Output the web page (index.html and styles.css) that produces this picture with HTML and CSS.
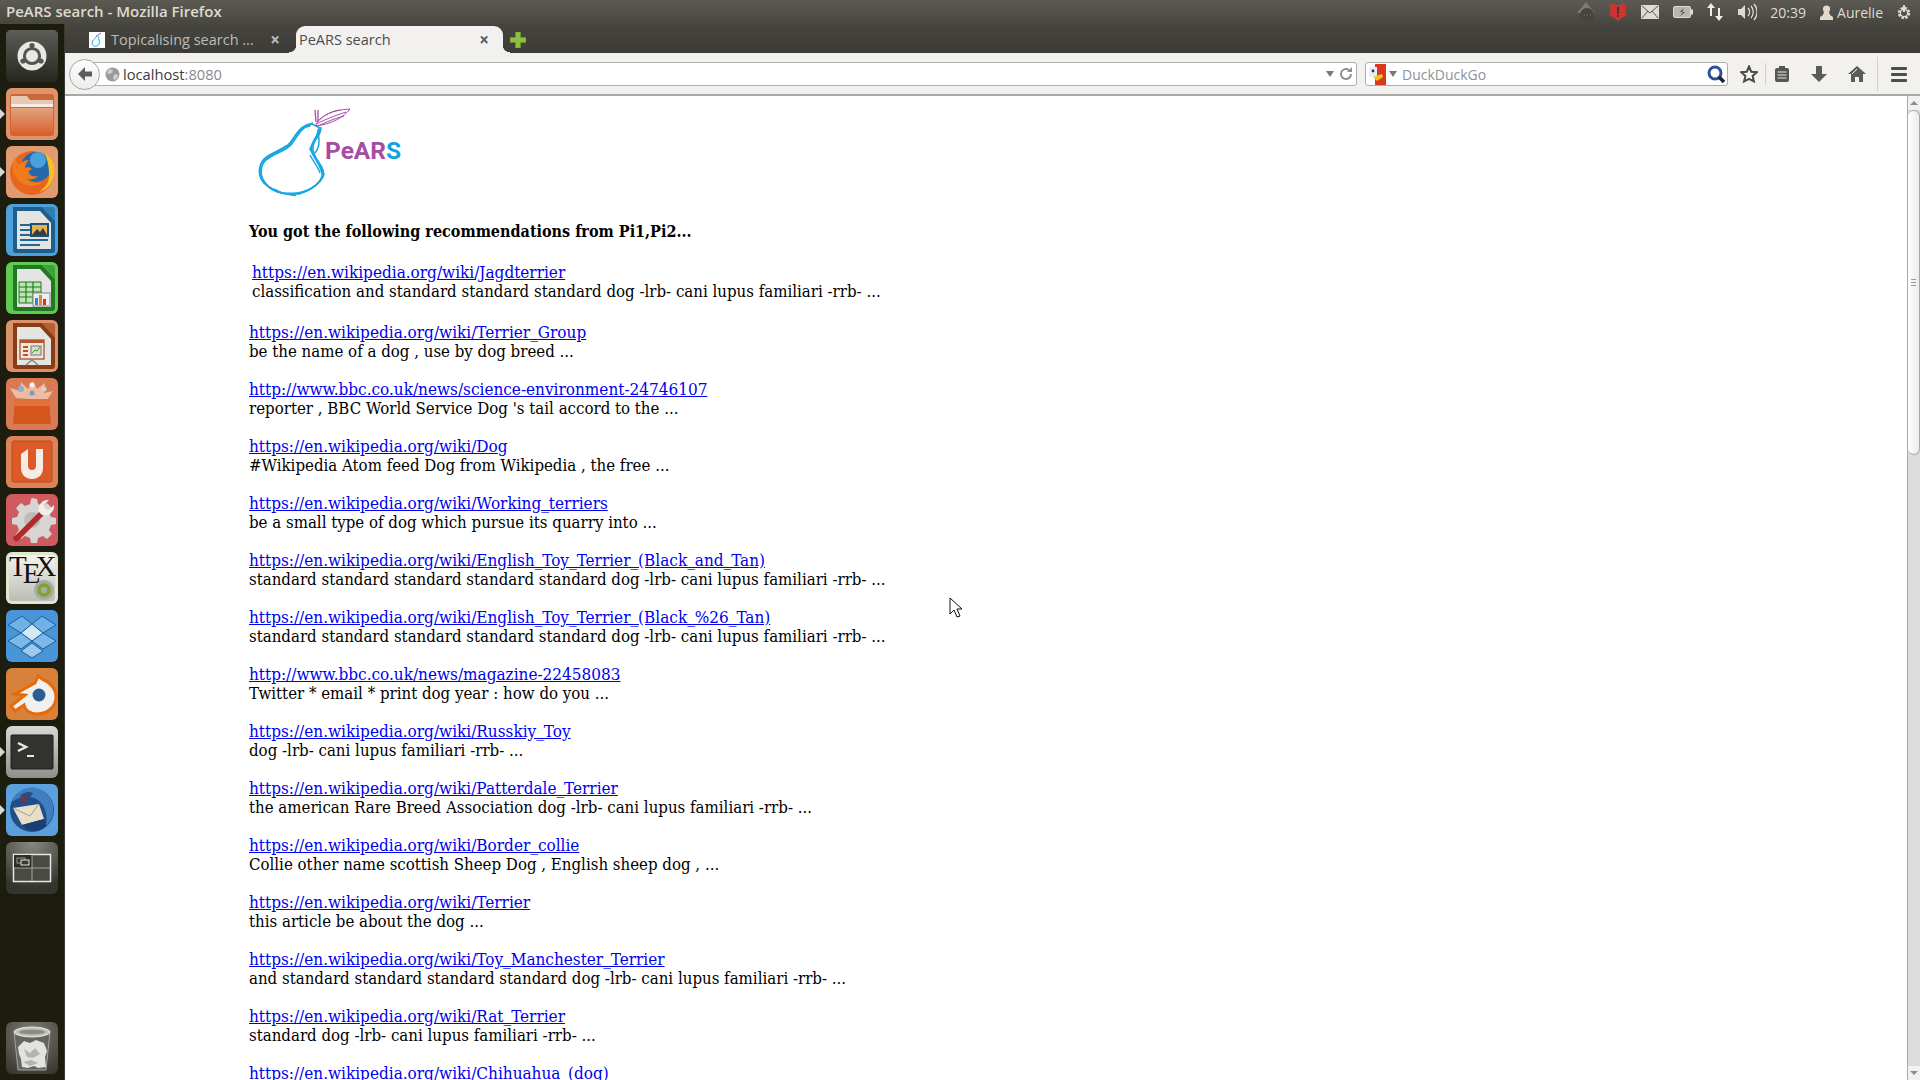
FILE: index.html
```html
<!DOCTYPE html>
<html lang="en">
<head>
    <meta charset="UTF-8">
    <title>PeARS search - Mozilla Firefox</title>
    <link rel="stylesheet" href="styles.css">
</head>
<body>
<div class="panel">
    <div class="panel-title">PeARS search - Mozilla Firefox</div>
    <div class="tray">
        <svg class="tray-cloud" width="24" height="22" viewBox="0 0 24 22"><path d="M3 12l9-11 9 11z" fill="#7d7b73"/><circle cx="13" cy="14" r="7" fill="#45443e"/><path d="M10 14h1m2 0h1m2 0h1" stroke="#85837b" stroke-width="1.2"/></svg>
        <svg class="tray-shield" width="20" height="20" viewBox="0 0 20 20"><path d="M1 4l4-3 3 2h4l3-2 4 3-2 5 2 4-5 3-4 3-4-3-5-3 2-4z" fill="#d0322d"/><path d="M9 5h2v7H9zm0 8h2v2H9z" fill="#3c3b37"/></svg>
        <svg class="tray-mail" width="18" height="14" viewBox="0 0 18 14"><rect width="18" height="14" rx="1" fill="#dfdbd2"/><path d="M1 1l8 7 8-7M1 13l6-7m10 7l-6-7" stroke="#56554f" fill="none"/></svg>
        <svg class="tray-batt" width="20" height="12" viewBox="0 0 20 12"><rect x=".5" y=".5" width="17" height="11" rx="1.5" fill="#b9b6ae" stroke="#dfdbd2"/><rect x="18" y="3.5" width="2" height="5" fill="#dfdbd2"/><path d="M11 2L7 6h3L7 10l5-4H9z" fill="#3c3b37"/></svg>
        <svg class="tray-net" width="18" height="20" viewBox="0 0 18 20"><path d="M5 1L1 6h3v8h2V6h3zM13 19l4-5h-3V6h-2v8H9z" fill="#ecebe6"/></svg>
        <svg class="tray-vol" width="20" height="18" viewBox="0 0 20 18"><path d="M1 6h3l4-4v14l-4-4H1z" fill="#dfdbd2"/><path d="M11 5a6 6 0 0 1 0 8M14 3a9 9 0 0 1 0 12M17 1a12 12 0 0 1 0 16" stroke="#dfdbd2" stroke-width="1.3" fill="none"/></svg>
        <span class="tray-time">20:39</span>
        <svg class="tray-user" width="13" height="15" viewBox="0 0 13 15"><circle cx="6.5" cy="4" r="3.6" fill="#dfdbd2"/><path d="M4 7h5l1 3 3 2v3H0v-3l3-2z" fill="#dfdbd2"/></svg>
        <span class="tray-name">Aurelie</span>
        <svg class="tray-gear" width="16" height="16" viewBox="0 0 16 16"><circle cx="8" cy="9" r="5" fill="none" stroke="#dfdbd2" stroke-width="2.4" stroke-dasharray="2.5 1.4"/><circle cx="8" cy="9" r="3.6" fill="none" stroke="#dfdbd2" stroke-width="1.2"/><rect x="7" y="1" width="2" height="7" fill="#dfdbd2"/></svg>
    </div>
</div>

<div class="desktop">
    <nav class="launcher">
        <div class="tile"><svg viewBox="0 0 52 52"><defs><linearGradient id="bfb" x1="0" y1="0" x2="0" y2="1"><stop offset="0" stop-color="#5e5e58"/><stop offset="1" stop-color="#26261f"/></linearGradient></defs><path d="M3 0h46l3 3v46l-3 3H3l-3-3V3z" fill="url(#bfb)"/><circle cx="26" cy="26" r="14.5" fill="#e8e8e6"/><circle cx="26" cy="26" r="7.6" fill="none" stroke="#55554f" stroke-width="3"/><circle cx="26" cy="15.5" r="2.6" fill="#55554f"/><circle cx="17" cy="31" r="2.6" fill="#55554f"/><circle cx="35" cy="31" r="2.6" fill="#55554f"/></svg></div>

        <div class="tile has-pip"><svg viewBox="0 0 52 52"><defs><linearGradient id="fld" x1="0" y1="0" x2="0" y2="1"><stop offset="0" stop-color="#e2a37e"/><stop offset="1" stop-color="#d85f2a"/></linearGradient></defs><rect width="52" height="52" rx="6" fill="#e0926a"/><rect x="4" y="6" width="44" height="42" rx="3" fill="#c9683c"/><path d="M5 20h42v25a2 2 0 0 1-2 2H7a2 2 0 0 1-2-2z" fill="url(#fld)"/><path d="M5 8h16l3 4h23v6H5z" fill="#e8c8b2"/><path d="M5 16h42v3H5z" fill="#f4ece5"/></svg></div>

        <div class="tile has-pip has-active"><svg viewBox="0 0 52 52"><rect width="52" height="52" rx="6" fill="#e29a70"/><circle cx="26" cy="27" r="22" fill="#e8651f"/><circle cx="30" cy="21" r="15" fill="#2468ad"/><circle cx="32" cy="14" r="8" fill="#4aa0da"/><path d="M9 11c-5 9-2 19 5 25 7 5 17 5 23 0-6 2-13 1-17-3 5 1 10 0 12-3-4 1-8 0-9-3-1-2 1-3 3-4-2-2-5-2-7-1 0-3 2-6 4-8-5 0-8 3-10 5-2-2-3-5-4-8z" fill="#ef7b1c"/><path d="M39 7c7 5 11 13 9 23-2 9-8 14-15 16 7-5 11-11 10-19 0-7-2-14-4-20z" fill="#f6c026"/></svg></div>

        <div class="tile"><svg viewBox="0 0 52 52"><rect width="52" height="52" rx="6" fill="#4f9fd8"/><path d="M7 3h29l13 14v29a3 3 0 0 1-3 3H10a3 3 0 0 1-3-3z" fill="#1b5f8e"/><path d="M36 3h10a3 3 0 0 1 3 3v11z" fill="#2f7fb5"/><path d="M11 7h23l11 12v26H11z" fill="#e4e4e2"/><path d="M14 20h10v2H14zm0 5h10v2H14zm0 5h10v2H14zm0 5h28v2H14zm0 5h20v2H14z" fill="#1d6a9a"/><rect x="24" y="19" width="19" height="14" fill="#1d4f74"/><rect x="26" y="21" width="15" height="10" fill="#e6b24a"/><path d="M26 31l5-6 3 3 3-4 4 7z" fill="#2f3f4a"/></svg></div>

        <div class="tile"><svg viewBox="0 0 52 52"><rect width="52" height="52" rx="6" fill="#5fca4d"/><path d="M7 3h29l13 14v29a3 3 0 0 1-3 3H10a3 3 0 0 1-3-3z" fill="#1f7a22"/><path d="M36 3h10a3 3 0 0 1 3 3v11z" fill="#3ea33a"/><path d="M11 7h23l11 12v26H11z" fill="#e4e4e2"/><path d="M13 20h22v21H13z" fill="#bfe3b4" stroke="#1d7d22"/><path d="M13 25h22M13 30h22M13 35h22M20 20v21M27 20v21" stroke="#1d7d22" fill="none" stroke-width="1.2"/><rect x="27" y="31" width="17" height="13" fill="#eee" stroke="#8a8a86"/><path d="M29 36h3v7h-3z" fill="#2e8ad0"/><path d="M33 33h3v10h-3z" fill="#e0872b"/><path d="M37 37h3v6h-3z" fill="#c33"/></svg></div>

        <div class="tile"><svg viewBox="0 0 52 52"><rect width="52" height="52" rx="6" fill="#dc9268"/><path d="M7 3h29l13 14v29a3 3 0 0 1-3 3H10a3 3 0 0 1-3-3z" fill="#8a3c16"/><path d="M36 3h10a3 3 0 0 1 3 3v11z" fill="#b06034"/><path d="M11 7h23l11 12v26H11z" fill="#e4e4e2"/><rect x="14" y="20" width="24" height="19" fill="#f1e5dd" stroke="#9c4a22" stroke-width="1.2"/><rect x="14" y="20" width="24" height="3" fill="#b5562a"/><path d="M17 26h5v2h-5zm0 4h5v2h-5zm0 4h5v2h-5z" fill="#b5562a"/><rect x="25" y="26" width="10" height="9" fill="#dcdcc8" stroke="#777"/><path d="M26 33l3-3 2 1 3-4" stroke="#3a9a3a" fill="none"/><path d="M20 45l6-5 6 5" stroke="#888" fill="none" stroke-width="1.4"/></svg></div>

        <div class="tile"><svg viewBox="0 0 52 52"><rect width="52" height="52" rx="6" fill="#d97a55"/><path d="M10 20L4 10l10 3 1-9 7 7 5-8 4 8 8-6-1 10 9-2-6 9z" fill="#f0cdb8" opacity=".8"/><path d="M9 21h34l2 25H7z" fill="#d4561e"/><path d="M9 21h34l.6 7H8.400z" fill="#e0713a"/><path d="M21 21v-4h10v4" fill="none" stroke="#eeb598" stroke-width="2"/><circle cx="15" cy="11" r="3" fill="#8fb0cc"/><circle cx="26" cy="7" r="2.5" fill="#f2f2f2"/><circle cx="38" cy="11" r="2.5" fill="#d9d2c8"/><circle cx="26" cy="15" r="2.5" fill="#7f9bb5"/></svg></div>

        <div class="tile"><svg viewBox="0 0 52 52"><rect width="52" height="52" rx="6" fill="#dd8259"/><rect x="6" y="5" width="40" height="41" rx="2" fill="#dc5a28" stroke="#b84a1f"/><path d="M15 18l7-5v17c0 3 2 4 4 4s4-1 4-4V13h7v19c0 7-5 11-11 11s-11-4-11-11z" fill="#f5ece6"/></svg></div>

        <div class="tile"><svg viewBox="0 0 52 52"><rect width="52" height="52" rx="6" fill="#cf5a60"/><path d="M26 4l5 1 1 5 5 2 4-3 5 5-3 4 2 5 5 1v6l-5 1-2 5 3 4-5 5-4-3-5 2-1 5h-6l-1-5-5-2-4 3-5-5 3-4-2-5-5-1v-6l5-1 2-5-3-4 5-5 4 3 5-2 1-5z" fill="#d6d5d2"/><circle cx="26" cy="26" r="8" fill="#bdbcb9"/><path d="M9 42L35 16l4 4L13 46a3 3 0 0 1-5-4z" fill="#b22a2a"/><path d="M33 18c-2-6 3-13 10-12l-5 5 1 4 4 1 5-5c1 7-6 12-12 10z" fill="#f0efec"/></svg></div>

        <div class="tile"><svg viewBox="0 0 52 52"><defs><linearGradient id="tx" x1="0" y1="0" x2="0" y2="1"><stop offset="0" stop-color="#f5f5ee"/><stop offset="1" stop-color="#bcbcb6"/></linearGradient></defs><rect width="52" height="52" rx="6" fill="#dfe7cf"/><rect x="3" y="3" width="46" height="46" rx="3" fill="url(#tx)"/><text class="tex-t" x="3" y="24">T<tspan dx="-4" dy="7">E</tspan><tspan dx="-5" dy="-7">X</tspan></text><circle cx="38" cy="38" r="10" fill="#a8a8a4"/><circle cx="38" cy="38" r="5" fill="none" stroke="#7da526" stroke-width="3.5"/></svg></div>

        <div class="tile"><svg viewBox="0 0 52 52"><rect width="52" height="52" rx="6" fill="#4a94d8"/><g stroke="#1b5e9b" stroke-linejoin="round"><path d="M16 6l10 8-11 9-13-8z" fill="#6fb0e6"/><path d="M36 6l-10 8 11 9 13-8z" fill="#6fb0e6"/><path d="M15 23L2 31l13 8 11-8z" fill="#7db8ea"/><path d="M37 23l13 8-13 8-11-8z" fill="#7db8ea"/><path d="M26 14l11 9-11 8-11-8z" fill="#d5e8f6"/><path d="M15 41l11-8 11 8-11 7z" fill="#9dcbee"/></g></svg></div>

        <div class="tile"><svg viewBox="0 0 52 52"><rect width="52" height="52" rx="6" fill="#d8813a"/><path d="M5 38l14-11-10-1 20-11 3-7 4 3c8 3 14 10 14 18 0 10-9 17-19 17-7 0-12-4-13-9l-9 6z" fill="#f1f0ee" stroke="#e56b0a" stroke-width="3"/><circle cx="33" cy="27" r="10.5" fill="#f2f1ee"/><circle cx="33" cy="27" r="6.5" fill="#2a5f95"/></svg></div>

        <div class="tile has-pip"><svg viewBox="0 0 52 52"><defs><linearGradient id="tm" x1="0" y1="0" x2="0" y2="1"><stop offset="0" stop-color="#d8d8d4"/><stop offset="1" stop-color="#8f8f8c"/></linearGradient></defs><rect width="52" height="52" rx="6" fill="url(#tm)"/><rect x="5" y="9" width="42" height="34" rx="1" fill="#333330" stroke="#1f1f1d"/><path d="M12 17l8 4-8 4" fill="none" stroke="#e8e8e6" stroke-width="2.5"/><path d="M21 29h7v2h-7z" fill="#e8e8e6"/></svg></div>

        <div class="tile has-pip"><svg viewBox="0 0 52 52"><rect width="52" height="52" rx="6" fill="#5b9fdc"/><circle cx="26" cy="26" r="22" fill="#1f4f88"/><path d="M6 18C10 8 20 2 30 4c9 2 15 9 17 17 1 8-1 16-7 21 2-9 0-20-8-26-8-5-18-4-26 2z" fill="#3f7ec0"/><path d="M14 12c4-4 9-5 13-3-2 3-5 7-8 10z" fill="#2a4f7f"/><path d="M7 24l26-4 5 15-22 6z" fill="#e7dfca"/><path d="M7 24l17 8 9-12" fill="none" stroke="#a89f88"/><circle cx="18" cy="15" r="2.600" fill="#9a2a2a"/><path d="M16 41l22-6 2 7-8 5-10-1z" fill="#183f72"/></svg></div>

        <div class="tile"><svg viewBox="0 0 52 52"><defs><radialGradient id="wk" cx=".5" cy="0" r=".9"><stop offset="0" stop-color="#8a8a82"/><stop offset="1" stop-color="#35352f"/></radialGradient></defs><rect width="52" height="52" rx="6" fill="url(#wk)"/><rect x="7.5" y="12.500" width="37" height="27" fill="#4a4a44" stroke="#e6e6e2" stroke-width="1.500"/><rect x="8" y="13" width="18" height="13" fill="#2e2e29"/><path d="M26 13v26M8 26h36" stroke="#bdbdb8" stroke-width=".8"/><rect x="11" y="16" width="8" height="5" fill="none" stroke="#999"/><rect x="15" y="18" width="8" height="5" fill="#3a3a34" stroke="#e6e6e2"/></svg></div>

        <div class="tile tile-trash"><svg viewBox="0 0 52 52"><defs><radialGradient id="tr" cx=".5" cy=".2" r=".9"><stop offset="0" stop-color="#7d7d76"/><stop offset="1" stop-color="#36362f"/></radialGradient></defs><rect width="52" height="52" rx="6" fill="url(#tr)"/><path d="M8 9l4 39h28l4-39z" fill="#65655d" stroke="#a4a49c"/><path d="M12 25l6-6 6 2 6-3 8 3 3 8-2 6 1 10-8 1-4-2-6 2-6-1-1-8-2-5z" fill="#e2e3e0"/><path d="M18 27l6 4 5-5 5 6-7 4-6-1zM17 40l8-2 7 3-8 3z" fill="#b3b4b0"/><ellipse cx="26" cy="10" rx="18" ry="5" fill="#c5c5c0" stroke="#e5e5e2"/><ellipse cx="26" cy="10" rx="13" ry="2.500" fill="#8d8d86"/></svg></div>
    </nav>

    <div class="window">
        <div class="tabs">
            <div class="tab">
                <svg class="favicon" width="16" height="16" viewBox="0 0 16 16"><rect width="16" height="16" fill="#fff"/><path d="M8 3C7 7 3 8 3 11s3 4 5 3 3-3 2-6 0-3-2-5z" fill="none" stroke="#2aa6e0"/><path d="M9 3l3-2" stroke="#a349a4"/></svg>
                <span class="tab-label">Topicalising search ...</span>
                <span class="tab-close">×</span>
            </div>
            <div class="tab tab-active">
                <span class="tab-label">PeARS search</span>
                <span class="tab-close">×</span>
            </div>
            <svg class="new-tab" width="16" height="16" viewBox="0 0 16 16"><path d="M5.500 0h5v5.500H16v5h-5.500V16h-5v-5.500H0v-5h5.500z" fill="#8ec03f" stroke="#6e9a2c" stroke-width=".6"/></svg>
        </div>

        <div class="toolbar">
            <div class="back-btn"><svg width="16" height="16" viewBox="0 0 16 16"><path d="M8 1L1 8l7 7V10.500h7v-5H8z" fill="#5b5b58"/></svg></div>
            <div class="urlbar">
                <svg class="globe" width="15" height="15" viewBox="0 0 15 15"><circle cx="7.500" cy="7.500" r="7" fill="#9a9a98"/><path d="M4 2l4 1-1 3-3 1-2-1zm6 5l3 1-1 4-3 1-1-3z" fill="#cfcfcd"/></svg>
                <span class="url-host">localhost</span><span class="url-port">:8080</span>
                <span class="url-drop"></span>
                <svg class="url-reload" width="14" height="14" viewBox="0 0 14 14"><path d="M12 7a5 5 0 1 1-2-4" fill="none" stroke="#8a8f93" stroke-width="2"/><path d="M8 5h5V0z" fill="#8a8f93"/></svg>
            </div>
            <div class="searchbar">
                <svg class="ddg" width="17" height="21" viewBox="0 0 17 21"><rect width="17" height="21" fill="#fff"/><rect x="6" y="0" width="11" height="21" fill="#d83a1f"/><path d="M0 3h8v10H0z" fill="#e9eef4"/><circle cx="4" cy="7" r="1.400" fill="#234"/><path d="M4 13l9-3 1 3-6 4z" fill="#f7c51e"/></svg>
                <span class="url-drop search-drop"></span>
                <span class="search-label">DuckDuckGo</span>
                <svg class="search-go" width="19" height="19" viewBox="0 0 19 19"><circle cx="8" cy="8" r="6" fill="#fff" stroke="#2d4f96" stroke-width="3"/><path d="M12 12l5 5" stroke="#15233f" stroke-width="3.500"/></svg>
            </div>
            <div class="tool-icons">
                <svg width="18" height="18" viewBox="0 0 18 18"><path d="M9 1.500l2.200 5.200 5.600.5-4.200 3.700 1.300 5.500L9 13.900 4.100 16.400l1.300-5.500L1.200 7.200l5.600-.5z" fill="#f5f5f3" stroke="#4a4a48" stroke-width="2"/></svg>
                <span class="tool-sep"></span>
                <svg width="16" height="18" viewBox="0 0 16 18"><rect x="1" y="3" width="14" height="14" rx="2" fill="#555553"/><rect x="5" y="1" width="6" height="4" fill="#555553"/><path d="M3.500 7h9M3.500 10h9M3.500 13h9" stroke="#e8e8e6" stroke-width="1.200"/></svg>
                <svg class="tool-gap" width="16" height="18" viewBox="0 0 16 18"><path d="M5 1h6v8h5l-8 8-8-8h5z" fill="#5b5b58"/></svg>
                <svg class="tool-gap" width="18" height="18" viewBox="0 0 18 18"><path d="M9 1L0 9h3v8h4v-5h4v5h4V9h3z" fill="#5b5b58"/><path d="M9 4L4 9" stroke="#f2f1f0"/></svg>
                <span class="tool-sep tool-sep-wide"></span>
                <div class="menu-btn"><span></span><span></span><span></span></div>
            </div>
        </div>

        <div class="viewport">
            <main class="page">
                <svg class="logo" width="155" height="100" viewBox="9 5 155 100">
                    <g fill="none" stroke="#1aa7e4" stroke-width="1.500">
                        <path d="M72 33C62 32 55 44 50 53 44 60 32 60 24 68 17 76 18 88 26 94 35 102 44 104 55 103 66 102 78 96 83 84 85 76 76 70 72 60 70 50 81 47 80 37z"/>
                        <path d="M73 32C63 34 57 46 51 54 43 62 33 62 25 70 19 77 20 89 28 95 37 101 47 105 57 102 68 100 79 95 82 85 84 77 74 69 71 59 71 49 79 46 79 37"/>
                        <path d="M71 34C61 35 54 47 49 55 41 61 30 63 22 71 18 80 21 90 30 97 38 103 48 103 59 103 70 99 81 93 84 83 82 73 73 67 73 57 73 47 82 45 81 36"/>
                        <path d="M70 35C60 36 56 45 48 54 40 59 31 61 21 73 19 84 24 93 32 98 40 104 50 102 61 102 72 98 80 92 83 86 81 75 75 66 70 58 74 48 79 44 78 38"/>
                        <path d="M34 98l8 4 14 3M78 42c2 8 2 14-3 20M70 64c3 6 8 12 10 18"/>
                    </g>
                    <g fill="none" stroke="#a64ca6" stroke-width="1">
                        <path d="M76 33C82 24 92 19 110 18 104 26 92 33 76 35z"/>
                        <path d="M76 33C84 29 94 25 106 21M78 35C86 31 96 27 104 25M77 31C84 24 92 20 100 19"/>
                        <path d="M76 31l-1-12M78 30l0-11" stroke-width="1.300"/>
                    </g>
                    <text class="logo-text" x="85" y="68"><tspan fill="#a64ca6">PeAR</tspan><tspan fill="#0fa3e0">S</tspan></text>
                </svg>
                <p class="intro">You got the following recommendations from Pi1,Pi2...</p>

                <div class="result result-first">
                    <a href="#">https://en.wikipedia.org/wiki/Jagdterrier</a><br>
                    classification and standard standard standard dog -lrb- cani lupus familiari -rrb- ...
                </div>
                <div class="result">
                    <a href="#">https://en.wikipedia.org/wiki/Terrier_Group</a><br>
                    be the name of a dog , use by dog breed ...
                </div>
                <div class="result">
                    <a href="#">http://www.bbc.co.uk/news/science-environment-24746107</a><br>
                    reporter , BBC World Service Dog 's tail accord to the ...
                </div>
                <div class="result">
                    <a href="#">https://en.wikipedia.org/wiki/Dog</a><br>
                    #Wikipedia Atom feed Dog from Wikipedia , the free ...
                </div>
                <div class="result">
                    <a href="#">https://en.wikipedia.org/wiki/Working_terriers</a><br>
                    be a small type of dog which pursue its quarry into ...
                </div>
                <div class="result">
                    <a href="#">https://en.wikipedia.org/wiki/English_Toy_Terrier_(Black_and_Tan)</a><br>
                    standard standard standard standard standard dog -lrb- cani lupus familiari -rrb- ...
                </div>
                <div class="result">
                    <a href="#">https://en.wikipedia.org/wiki/English_Toy_Terrier_(Black_%26_Tan)</a><br>
                    standard standard standard standard standard dog -lrb- cani lupus familiari -rrb- ...
                </div>
                <div class="result">
                    <a href="#">http://www.bbc.co.uk/news/magazine-22458083</a><br>
                    Twitter * email * print dog year : how do you ...
                </div>
                <div class="result">
                    <a href="#">https://en.wikipedia.org/wiki/Russkiy_Toy</a><br>
                    dog -lrb- cani lupus familiari -rrb- ...
                </div>
                <div class="result">
                    <a href="#">https://en.wikipedia.org/wiki/Patterdale_Terrier</a><br>
                    the american Rare Breed Association dog -lrb- cani lupus familiari -rrb- ...
                </div>
                <div class="result">
                    <a href="#">https://en.wikipedia.org/wiki/Border_collie</a><br>
                    Collie other name scottish Sheep Dog , English sheep dog , ...
                </div>
                <div class="result">
                    <a href="#">https://en.wikipedia.org/wiki/Terrier</a><br>
                    this article be about the dog ...
                </div>
                <div class="result">
                    <a href="#">https://en.wikipedia.org/wiki/Toy_Manchester_Terrier</a><br>
                    and standard standard standard standard dog -lrb- cani lupus familiari -rrb- ...
                </div>
                <div class="result">
                    <a href="#">https://en.wikipedia.org/wiki/Rat_Terrier</a><br>
                    standard dog -lrb- cani lupus familiari -rrb- ...
                </div>
                <div class="result">
                    <a href="#">https://en.wikipedia.org/wiki/Chihuahua_(dog)</a><br>
                    a small breed of dog ...
                </div>
            </main>
            <div class="scrollbar">
                <div class="sb-arrow"><span class="sb-up"></span></div>
                <div class="sb-thumb"><span></span><span></span><span></span></div>
                <div class="sb-track"></div>
                <div class="sb-arrow"><span class="sb-down"></span></div>
            </div>
            <svg class="cursor" width="14" height="21" viewBox="0 0 14 21"><path d="M1 1v16l4-4 3 7 3-1-3-7h5z" fill="#fff" stroke="#111"/></svg>
        </div>
    </div>
</div>
</body>
</html>
```

FILE: styles.css
```css
html, body {
    margin: 0;
    height: 100%;
    overflow: hidden;
}
body {
    font-family: "Open Sans", "Noto Sans", sans-serif;
    background-color: #fff;
    display: flex;
    flex-direction: column;
}

/* top panel */
.panel {
    height: 24px;
    flex: none;
    display: flex;
    align-items: center;
    justify-content: space-between;
    background: linear-gradient(#5c5b53, #47463f);
    color: #dfdbd2;
}
.panel-title {
    padding: 0 0 2px 6px;
    font-size: 15px;
    font-weight: 600;
}
.tray {
    display: flex;
    align-items: center;
    padding-right: 8px;
}
.tray-cloud { margin-right: 10px; }
.tray-shield { margin-right: 13px; }
.tray-mail { margin-right: 14px; }
.tray-batt { margin-right: 13px; }
.tray-net { margin-right: 13px; }
.tray-vol { margin-right: 13px; }
.tray-time { font-size: 14px; margin-right: 14px; }
.tray-user { margin-right: 4px; }
.tray-name { font-size: 14px; margin-right: 13px; }

.desktop {
    flex: 1;
    display: flex;
    min-height: 0;
}

/* launcher */
.launcher {
    width: 65px;
    flex: none;
    box-sizing: border-box;
    padding: 6px 0 6px 6px;
    background-color: #1c1d0f;
    border-right: 1px solid #3a3a33;
    display: flex;
    flex-direction: column;
    gap: 6px;
}
.tile {
    width: 52px;
    height: 52px;
    position: relative;
}
.tile svg { display: block; }
.tile-trash { margin-top: auto; }
.has-pip::before,
.has-active::after {
    content: "";
    position: absolute;
    top: 21px;
    border: 5px solid transparent;
}
.has-pip::before {
    left: -6px;
    border-left-color: #d8d8d4;
}
.has-active::after {
    right: -12px;
    border-right-color: #d8d8d4;
}
.tex-t {
    font-family: "Liberation Serif", serif;
    font-size: 29px;
    fill: #111;
}

/* browser window */
.window {
    flex: 1;
    min-width: 0;
    display: flex;
    flex-direction: column;
}
.tabs {
    height: 29px;
    flex: none;
    display: flex;
    align-items: flex-end;
    background: linear-gradient(#46453f, #3c3b37);
    padding-left: 24px;
    font-size: 14.5px;
}
.tab {
    width: 207px;
    height: 27px;
    display: flex;
    align-items: center;
    color: #bdbcb6;
    box-sizing: border-box;
}
.favicon { margin-right: 6px; }
.tab-label { flex: 1; white-space: nowrap; }
.tab-close {
    font-size: 17px;
    font-weight: 700;
    line-height: 1;
    color: #bdbcb6;
    margin-right: 16px;
}
.tab-active {
    background-color: #f2f1f0;
    color: #4c4c4c;
    border-radius: 9px 9px 0 0;
    padding-left: 3px;
    position: relative;
}
.tab-active .tab-close { color: #5b5b58; margin-right: 14px; }
.tab-active::before,
.tab-active::after {
    content: "";
    position: absolute;
    bottom: 0;
    width: 7px;
    height: 8px;
}
.tab-active::before {
    left: -7px;
    background: radial-gradient(circle at 0 0, transparent 7px, #f2f1f0 7.5px);
}
.tab-active::after {
    right: -7px;
    background: radial-gradient(circle at 100% 0, transparent 7px, #f2f1f0 7.5px);
}
.new-tab { margin: 0 0 5px 7px; }

.toolbar {
    height: 43px;
    flex: none;
    box-sizing: border-box;
    display: flex;
    align-items: center;
    background-color: #f2f1f0;
    border-bottom: 2px solid #a8a8a6;
    padding-left: 4px;
    padding-top: 1px;
    font-size: 14px;
}
.back-btn {
    width: 31px;
    height: 31px;
    flex: none;
    box-sizing: border-box;
    border: 1px solid #a5a8ac;
    border-radius: 50%;
    background: linear-gradient(#fdfdfd, #ececec);
    display: flex;
    align-items: center;
    justify-content: center;
    position: relative;
    z-index: 1;
}
.urlbar {
    width: 1269px;
    height: 24px;
    margin-left: -12px;
    padding-left: 16px;
    box-sizing: border-box;
    display: flex;
    align-items: center;
    background-color: #fff;
    border: 1px solid #aeaeac;
    border-radius: 0 3px 3px 0;
    color: #3c3c3c;
    font-size: 14.7px;
}
.globe { margin-right: 3px; }
.url-port { color: #8a8a8a; flex: 1; }
.url-drop {
    width: 0;
    height: 0;
    border: 4px solid transparent;
    border-top: 6px solid #77797c;
    border-bottom: 0;
}
.url-reload { margin: 0 3px 0 5px; }
.searchbar {
    width: 363px;
    height: 24px;
    margin-left: 8px;
    padding: 0 1px 0 3px;
    box-sizing: border-box;
    display: flex;
    align-items: center;
    background-color: #fff;
    border: 1px solid #aeaeac;
    border-radius: 3px;
    color: #8f9296;
}
.search-drop { margin: 0 5px 0 3px; }
.search-label { flex: 1; }
.tool-icons {
    display: flex;
    align-items: center;
    margin-left: 12px;
}
.tool-sep {
    width: 1px;
    height: 22px;
    background-color: #cfd2d4;
    margin: 0 8px 0 7px;
}
.tool-gap { margin-left: 21px; }
.tool-sep-wide {
    height: 34px;
    margin: 0 13px 0 11px;
}
.menu-btn {
    width: 16px;
    display: flex;
    flex-direction: column;
    gap: 3px;
}
.menu-btn span {
    height: 3px;
    background-color: #4d4d4b;
    border-radius: 1px;
}

/* page */
.viewport {
    flex: 1;
    min-height: 0;
    display: flex;
    position: relative;
    background-color: #fff;
}
.page {
    flex: 1;
    min-width: 0;
    overflow: hidden;
    padding-left: 184px;
    font-family: "DejaVu Serif Condensed", "DejaVu Serif", serif;
    font-size: 16.7px;
    line-height: 19px;
    color: #000;
}
.logo { display: block; }
.logo-text {
    font-family: "Roboto", sans-serif;
    font-size: 24.5px;
    font-weight: 700;
}
.intro {
    margin: 26px 0 22px;
    font-size: 16px;
    font-weight: 700;
}
.result { margin-bottom: 19px; }
.result-first {
    padding-left: 3px;
    margin-bottom: 22px;
}
.result a { color: #0000ee; font-size: 17px; }

.scrollbar {
    width: 13px;
    flex: none;
    display: flex;
    flex-direction: column;
    background-color: #dcdcdc;
    border-left: 1px solid #a8a8a6;
    box-sizing: border-box;
}
.sb-arrow {
    height: 14px;
    flex: none;
    background-color: #f3f2f1;
    display: flex;
    align-items: center;
    justify-content: center;
}
.sb-up, .sb-down {
    width: 0;
    height: 0;
    border: 4px solid transparent;
}
.sb-up { border-bottom: 4px solid #8c8c8c; border-top: 0; }
.sb-down { border-top: 4px solid #8c8c8c; border-bottom: 0; }
.sb-thumb {
    height: 345px;
    flex: none;
    box-sizing: border-box;
    border: 1px solid #a8a8a6;
    border-left: 0;
    border-radius: 6px;
    background: linear-gradient(90deg, #ffffff, #ecebe9);
    display: flex;
    flex-direction: column;
    align-items: center;
    justify-content: center;
    gap: 2px;
}
.sb-thumb span {
    width: 5px;
    height: 1px;
    background-color: #9a9a98;
}
.sb-track { flex: 1; }
.cursor {
    position: absolute;
    left: 884px;
    top: 501px;
}
```
